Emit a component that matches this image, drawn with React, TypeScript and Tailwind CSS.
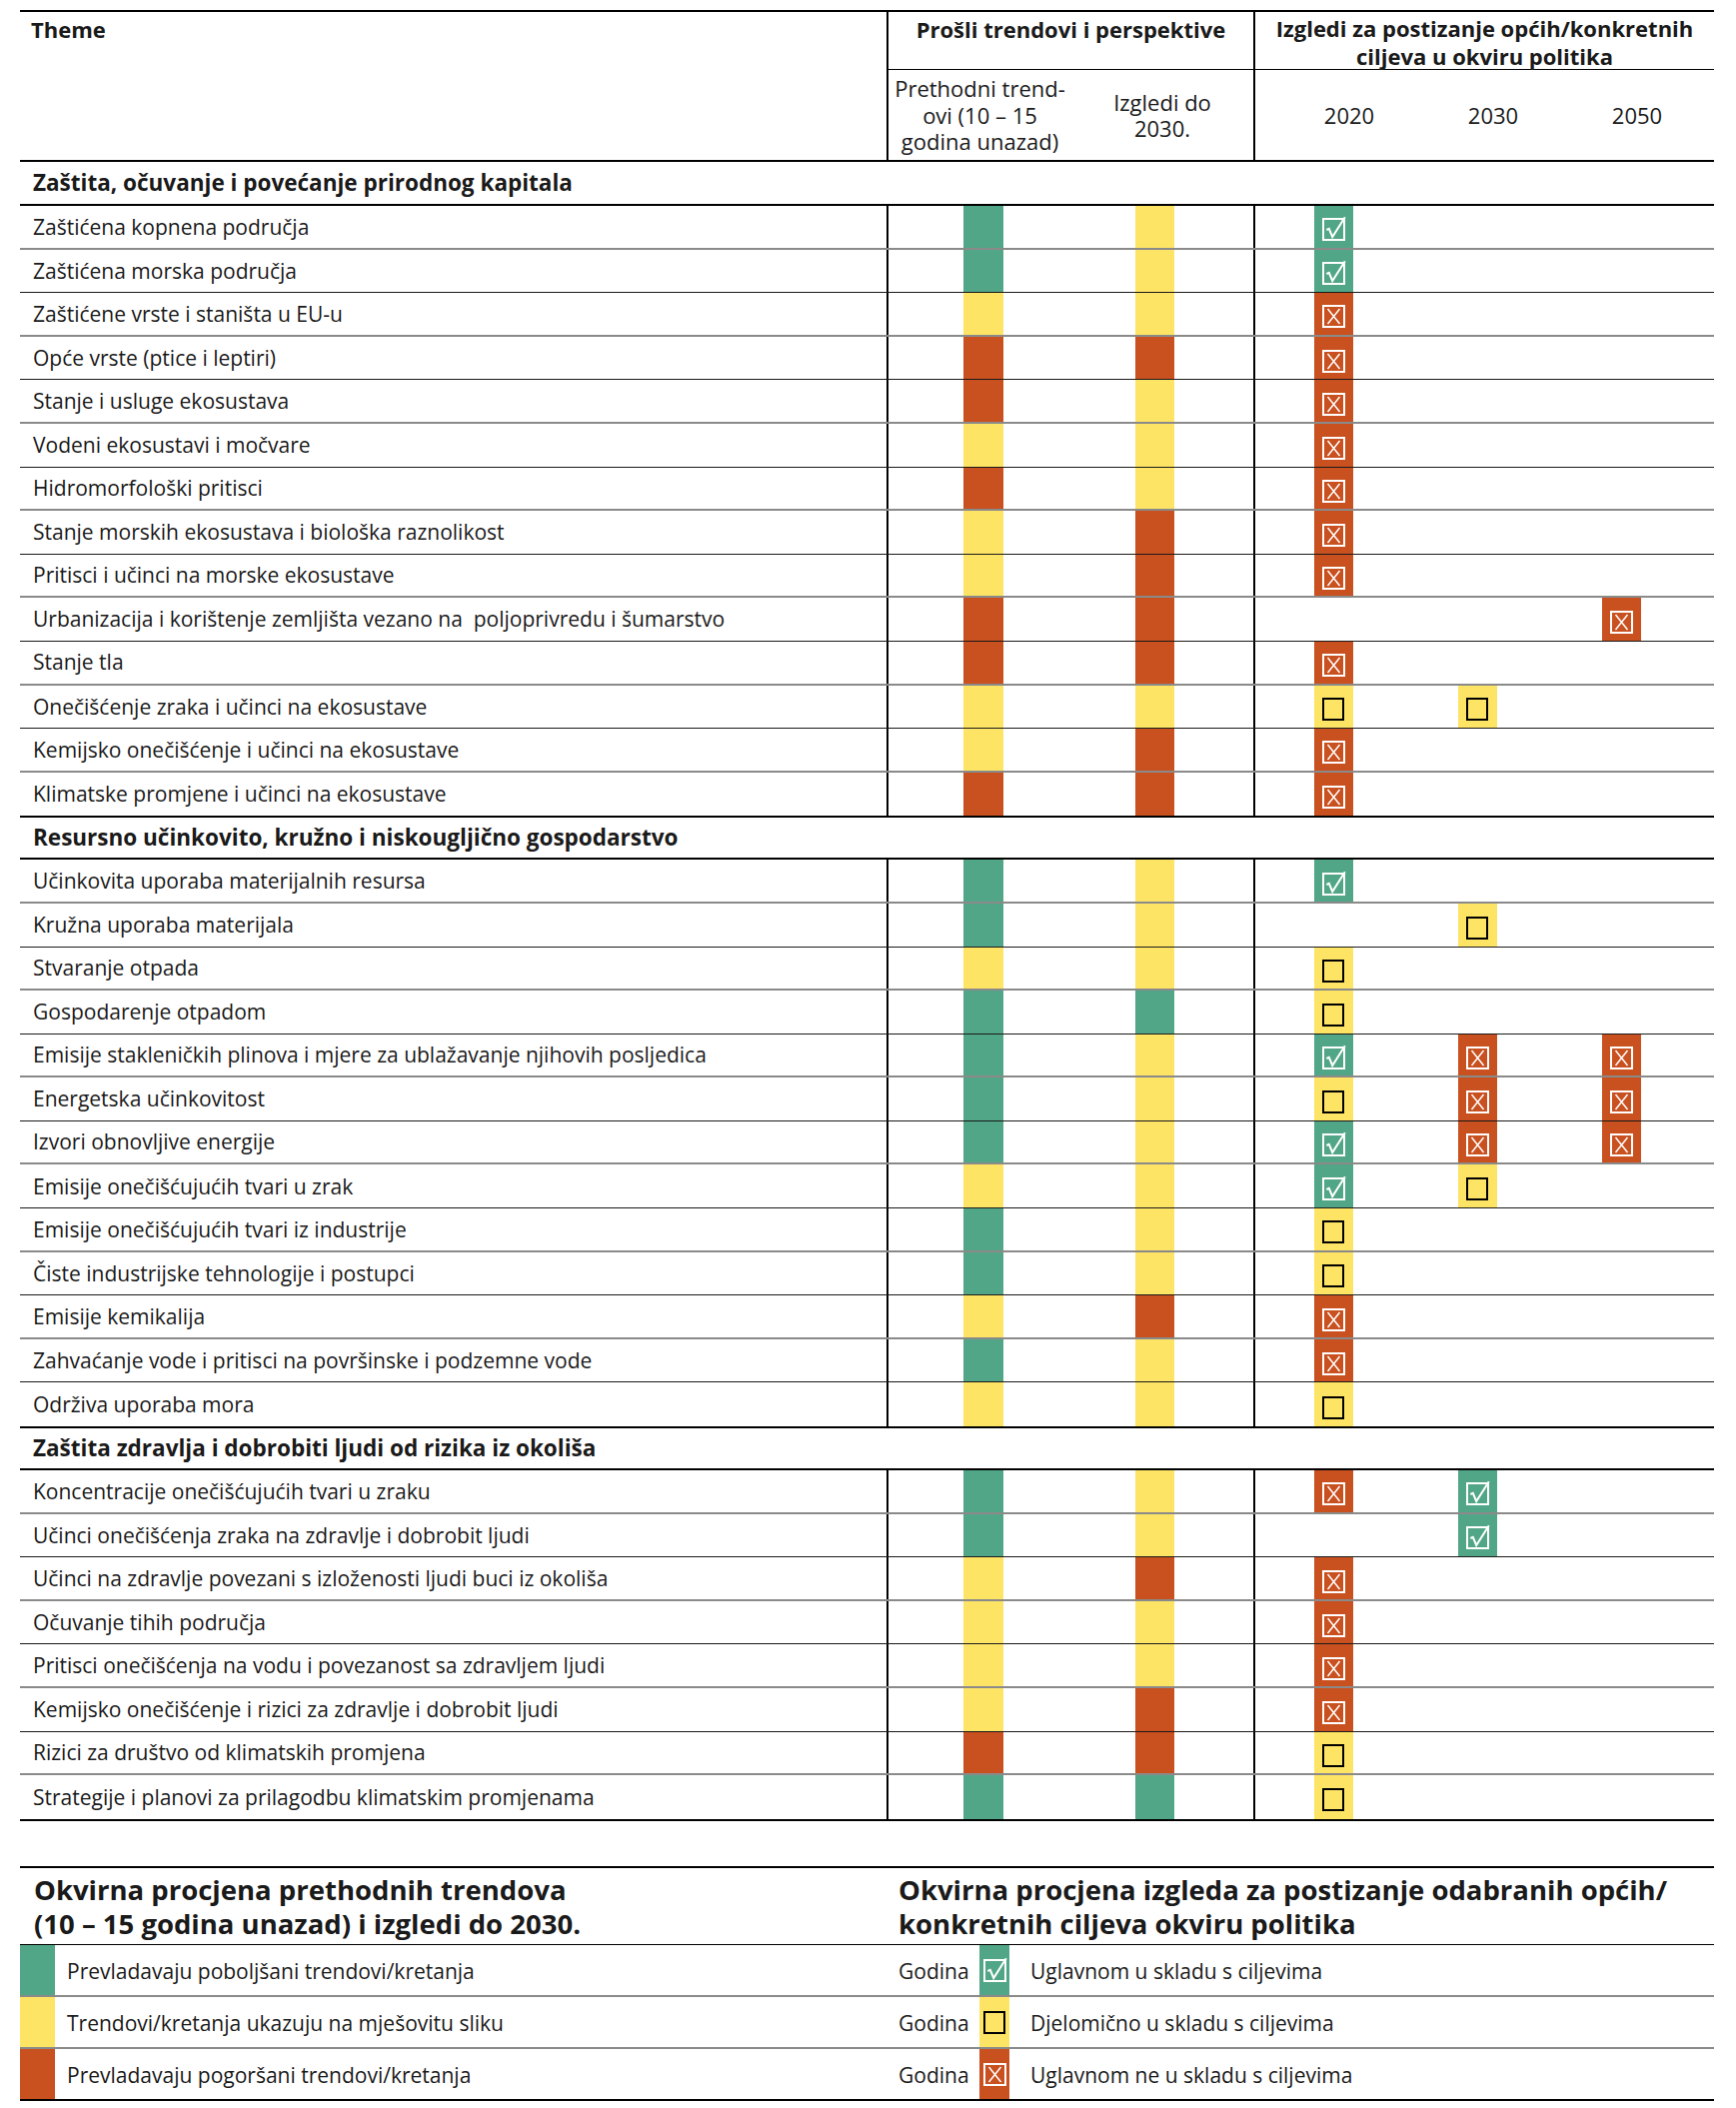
import React from "react";

type Level = "g" | "y" | "r";
type Goals = [Level | null, Level | null, Level | null];
type Row = { name: string; past: Level; outlook: Level; goals: Goals };
type Section = { title: string; rows: Row[] };

const barBg: Record<Level, string> = {
  g: "bg-[#52a688]",
  y: "bg-[#fee464]",
  r: "bg-[#c9501f]",
};

const r = (name: string, past: Level, outlook: Level, goals: Goals): Row => ({
  name,
  past,
  outlook,
  goals,
});

const sections: Section[] = [
  {
    title: "Zaštita, očuvanje i povećanje prirodnog kapitala",
    rows: [
      r("Zaštićena kopnena područja", "g", "y", ["g", null, null]),
      r("Zaštićena morska područja", "g", "y", ["g", null, null]),
      r("Zaštićene vrste i staništa u EU-u", "y", "y", ["r", null, null]),
      r("Opće vrste (ptice i leptiri)", "r", "r", ["r", null, null]),
      r("Stanje i usluge ekosustava", "r", "y", ["r", null, null]),
      r("Vodeni ekosustavi i močvare", "y", "y", ["r", null, null]),
      r("Hidromorfološki pritisci", "r", "y", ["r", null, null]),
      r("Stanje morskih ekosustava i biološka raznolikost", "y", "r", ["r", null, null]),
      r("Pritisci i učinci na morske ekosustave", "y", "r", ["r", null, null]),
      r(
        "Urbanizacija i korištenje zemljišta vezano na  poljoprivredu i šumarstvo",
        "r",
        "r",
        [null, null, "r"]
      ),
      r("Stanje tla", "r", "r", ["r", null, null]),
      r("Onečišćenje zraka i učinci na ekosustave", "y", "y", ["y", "y", null]),
      r("Kemijsko onečišćenje i učinci na ekosustave", "y", "r", ["r", null, null]),
      r("Klimatske promjene i učinci na ekosustave", "r", "r", ["r", null, null]),
    ],
  },
  {
    title: "Resursno učinkovito, kružno i niskougljično gospodarstvo",
    rows: [
      r("Učinkovita uporaba materijalnih resursa", "g", "y", ["g", null, null]),
      r("Kružna uporaba materijala", "g", "y", [null, "y", null]),
      r("Stvaranje otpada", "y", "y", ["y", null, null]),
      r("Gospodarenje otpadom", "g", "g", ["y", null, null]),
      r(
        "Emisije stakleničkih plinova i mjere za ublažavanje njihovih posljedica",
        "g",
        "y",
        ["g", "r", "r"]
      ),
      r("Energetska učinkovitost", "g", "y", ["y", "r", "r"]),
      r("Izvori obnovljive energije", "g", "y", ["g", "r", "r"]),
      r("Emisije onečišćujućih tvari u zrak", "y", "y", ["g", "y", null]),
      r("Emisije onečišćujućih tvari iz industrije", "g", "y", ["y", null, null]),
      r("Čiste industrijske tehnologije i postupci", "g", "y", ["y", null, null]),
      r("Emisije kemikalija", "y", "r", ["r", null, null]),
      r("Zahvaćanje vode i pritisci na površinske i podzemne vode", "g", "y", ["r", null, null]),
      r("Održiva uporaba mora", "y", "y", ["y", null, null]),
    ],
  },
  {
    title: "Zaštita zdravlja i dobrobiti ljudi od rizika iz okoliša",
    rows: [
      r("Koncentracije onečišćujućih tvari u zraku", "g", "y", ["r", "g", null]),
      r("Učinci onečišćenja zraka na zdravlje i dobrobit ljudi", "g", "y", [null, "g", null]),
      r("Učinci na zdravlje povezani s izloženosti ljudi buci iz okoliša", "y", "r", ["r", null, null]),
      r("Očuvanje tihih područja", "y", "y", ["r", null, null]),
      r("Pritisci onečišćenja na vodu i povezanost sa zdravljem ljudi", "y", "y", ["r", null, null]),
      r("Kemijsko onečišćenje i rizici za zdravlje i dobrobit ljudi", "y", "r", ["r", null, null]),
      r("Rizici za društvo od klimatskih promjena", "r", "r", ["y", null, null]),
      r("Strategije i planovi za prilagodbu klimatskim promjenama", "g", "g", ["y", null, null]),
    ],
  },
];

function Mark({ level }: { level: Level }) {
  if (level === "y") {
    return <div className="w-[22px] h-[23px] border-2 border-black" />;
  }
  return (
    <svg width="23" height="23" viewBox="0 0 23 23" className="overflow-visible">
      <rect x="1" y="1" width="21" height="21" fill="none" stroke="white" strokeWidth="2" />
      {level === "g" ? (
        <path
          d="M4.3 12 L6.8 10.8 L10.2 19 L22.8 -0.8"
          fill="none"
          stroke="white"
          strokeWidth="2"
        />
      ) : (
        <path d="M5.5 4 L17.5 19 M17.5 4 L5.5 19" fill="none" stroke="white" strokeWidth="1.5" />
      )}
    </svg>
  );
}

function DataRow({ row, last, odd }: { row: Row; last: boolean; odd: boolean }) {
  const line = last ? "" : odd ? "border-b-2 border-[#8a8a8a]" : "border-b border-[#1a1a1a]";
  return (
    <div className={`flex h-[43.6px] ${line}`}>
      <div className="w-[867px] pl-[13px] pt-[1px] flex items-center whitespace-pre text-[21px]">
        {row.name}
      </div>
      <div className="w-[367px] border-l-2 border-black flex pl-[75px] gap-[132px]">
        <div className={`w-[40px] ${barBg[row.past]}`} />
        <div className={`w-[39px] ${barBg[row.outlook]}`} />
      </div>
      <div className="flex-1 border-l-2 border-black flex pl-[6px]">
        {row.goals.map((g, i) => (
          <div key={i} className="w-[144px] flex justify-center">
            {g && (
              <div className={`w-[39px] flex items-center justify-center pt-[6px] ${barBg[g]}`}>
                <Mark level={g} />
              </div>
            )}
          </div>
        ))}
      </div>
    </div>
  );
}

const legendPast: { level: Level; text: string }[] = [
  { level: "g", text: "Prevladavaju poboljšani trendovi/kretanja" },
  { level: "y", text: "Trendovi/kretanja ukazuju na mješovitu sliku" },
  { level: "r", text: "Prevladavaju pogoršani trendovi/kretanja" },
];

const legendGoals: string[] = [
  "Uglavnom u skladu s ciljevima",
  "Djelomično u skladu s ciljevima",
  "Uglavnom ne u skladu s ciljevima",
];

export default function App() {
  return (
    <div className="w-[1737px] min-h-[2109px] bg-white text-[#1a1a1a] font-['Open_Sans',sans-serif]">
      <div className="pt-[10px] ml-[20px] w-[1695px]">
        {/* header */}
        <div className="flex h-[152px] border-t-2 border-b-2 border-black">
          <div className="w-[867px] pl-[11px] pt-[4px] text-[22px] font-bold leading-[27px]">
            Theme
          </div>
          <div className="w-[367px] border-l-2 border-black flex flex-col">
            <div className="h-[58px] border-b border-black pt-[4px] text-center text-[22px] font-bold leading-[27px]">
              Prošli trendovi i perspektive
            </div>
            <div className="flex-1 flex text-[22px] leading-[26.5px]">
              <div className="w-[183px] flex items-center justify-center text-center">
                <span>
                  Prethodni trend-
                  <br />
                  ovi (10 – 15
                  <br />
                  godina unazad)
                </span>
              </div>
              <div className="w-[182px] flex items-center justify-center text-center">
                <span>
                  Izgledi do
                  <br />
                  2030.
                </span>
              </div>
            </div>
          </div>
          <div className="flex-1 border-l-2 border-black flex flex-col">
            <div className="h-[58px] border-b border-black pt-[3px] text-center text-[22px] font-bold leading-[27.5px]">
              Izgledi za postizanje općih/konkretnih
              <br />
              ciljeva u okviru politika
            </div>
            <div className="flex-1 flex pl-[22px] text-[22px]">
              {["2020", "2030", "2050"].map((y) => (
                <div key={y} className="w-[144px] flex items-center justify-center">
                  {y}
                </div>
              ))}
            </div>
          </div>
        </div>

        {sections.map((s, si) => (
          <div key={s.title}>
            <div
              className={`h-[44px] flex items-center pl-[13px] text-[22.5px] font-bold border-b-2 border-black ${
                si > 0 ? "border-t-2" : ""
              }`}
            >
              {s.title}
            </div>
            {s.rows.map((row, ri) => (
              <DataRow key={row.name} row={row} last={ri === s.rows.length - 1} odd={ri % 2 === 0} />
            ))}
          </div>
        ))}
        <div className="border-t-2 border-black" />

        {/* legend */}
        <div className="mt-[45px] border-t-2 border-black">
          <div className="flex h-[77px] border-b border-black text-[27.5px] font-bold leading-[34px]">
            <div className="w-[867px] pl-[14px] pt-[5px]">
              Okvirna procjena prethodnih trendova
              <br />
              (10 – 15 godina unazad) i izgledi do 2030.
            </div>
            <div className="flex-1 pl-[12px] pt-[5px]">
              Okvirna procjena izgleda za postizanje odabranih općih/
              <br />
              konkretnih ciljeva okviru politika
            </div>
          </div>
          {legendPast.map((item, i) => (
            <div
              key={item.level}
              className={`flex h-[52px] text-[21px] ${
                i === 2 ? "border-b-2 border-black" : "border-b-2 border-[#8a8a8a]"
              }`}
            >
              <div className="w-[867px] flex">
                <div className={`w-[35px] ${barBg[item.level]}`} />
                <div className="pl-[12px] pt-[4px] flex items-center">{item.text}</div>
              </div>
              <div className="flex-1 flex pl-[12px]">
                <div className="w-[81px] pt-[4px] flex items-center">Godina</div>
                <div className={`w-[30px] flex items-center justify-center pt-[2px] ${barBg[item.level]}`}>
                  <Mark level={item.level} />
                </div>
                <div className="pl-[21px] pt-[4px] flex items-center">{legendGoals[i]}</div>
              </div>
            </div>
          ))}
        </div>
      </div>
    </div>
  );
}
